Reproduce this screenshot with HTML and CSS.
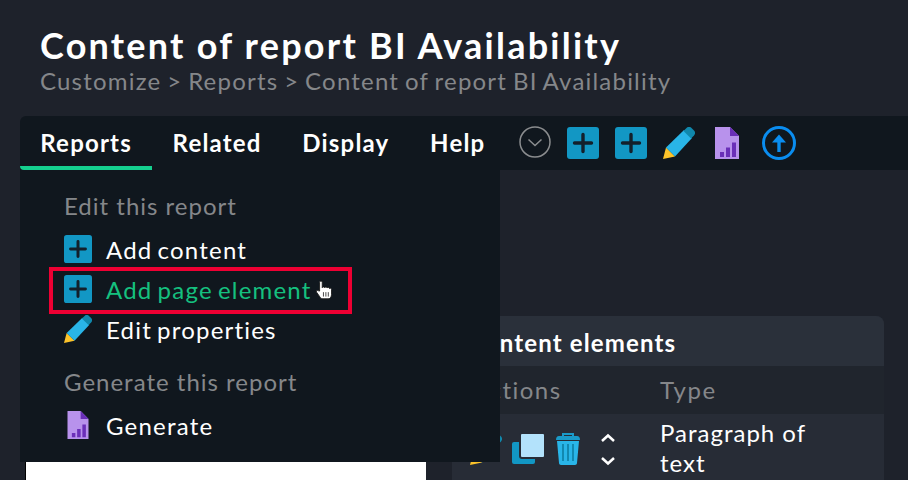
FILE: index.html
```html
<!DOCTYPE html>
<html lang="en">

<head>
    <meta charset="UTF-8">
    <title>Content of report BI Availability</title>
    <link rel="stylesheet" href="styles.css">
</head>

<body>

    <svg class="defs" width="0" height="0">
        <symbol id="plus" viewBox="0 0 32 32">
            <rect width="32" height="32" rx="3" fill="#1297c4"></rect>
            <path d="M16 7.500v17M7.500 16h17" stroke="#13202b" stroke-width="3.400" stroke-linecap="round"></path>
        </symbol>
        <symbol id="pencil" viewBox="0 0 32 32">
            <path d="M0 32l3-11.500 9 9z" fill="#fcc32a"></path>
            <path d="M3 20.500L21 3l8 8-17 18.500z" fill="#29b5e8"></path>
            <path d="M20.500 4l3-3c1.500-1.500 3.500-1.500 5 0l2.500 2.500c1.500 1.500 1.500 3.500 0 5l-3 3z" fill="#1088ac"></path>
        </symbol>
        <symbol id="report" viewBox="0 0 24 32">
            <path d="M0 0h15l9 9v23H0z" fill="#b892ec"></path>
            <path d="M15 0l9 9h-9z" fill="#6a2fb8"></path>
            <path d="M5 25h4v5H5zM11 20.500h4V30h-4zM17 15.500h4V30h-4z" fill="#6a2fb8"></path>
        </symbol>
    </svg>

    <header class="page-head">
        <h1 class="title">Content of report BI Availability</h1>
        <p class="breadcrumb">Customize &gt; Reports &gt; Content of report BI Availability</p>
    </header>

    <nav class="menubar">
        <a class="tab active">Reports</a>
        <a class="tab">Related</a>
        <a class="tab">Display</a>
        <a class="tab">Help</a>

        <div class="tools">
            <svg class="tool-toggle" viewBox="0 0 32 32">
                <circle cx="16" cy="16" r="15" fill="none" stroke="#8b8d8f" stroke-width="1.500"></circle>
                <path d="M9.500 13.500l6.500 6 6.500-6" fill="none" stroke="#8b8d8f" stroke-width="1.500"></path>
            </svg>
            <svg class="icon"><use href="#plus"></use></svg>
            <svg class="icon"><use href="#plus"></use></svg>
            <svg class="icon"><use href="#pencil"></use></svg>
            <svg class="icon-report"><use href="#report"></use></svg>
            <svg class="tool-up" viewBox="0 0 34 34">
                <circle cx="17" cy="17" r="15.500" fill="none" stroke="#0a8df0" stroke-width="3"></circle>
                <path d="M17 26V11" stroke="#0a8df0" stroke-width="3.400"></path>
                <path d="M10 16.500L17 8.500l7 8z" fill="#0a8df0"></path>
            </svg>
        </div>
    </nav>

    <div class="dropdown">
        <h3 class="group first">Edit this report</h3>
        <a class="entry"><svg class="entry-icon"><use href="#plus"></use></svg>Add content</a>
        <a class="entry hover">
            <svg class="entry-icon"><use href="#plus"></use></svg>Add page element
            <svg class="hand" viewBox="0 0 16 19">
                <path d="M4 10V2.200c0-1.600 2.400-1.600 2.400 0V7c0-1 2-1 2.200 0 .2-.9 2-.9 2.200.2.300-.8 2.200-.6 2.200.6 0-.6 1.800-.6 1.800 .8v4.400c0 2.200-1 4-3 4H7c-1.500 0-2.500-1-3.200-2.400L1.300 11c-.7-1.300 1-2.200 1.800-1.200z" fill="#fff" stroke="#1a1a1a" stroke-width=".8"></path>
                <path d="M7.500 11v4M9.700 11v4M11.900 11v4" stroke="#333" stroke-width=".8"></path>
            </svg>
        </a>
        <a class="entry"><svg class="entry-icon"><use href="#pencil"></use></svg>Edit properties</a>
        <h3 class="group">Generate this report</h3>
        <a class="entry"><svg class="entry-icon-report"><use href="#report"></use></svg>Generate</a>
    </div>

    <div class="highlight"></div>

    <main class="content">
        <div class="preview"></div>

        <section class="card">
            <h2 class="card-title">Content elements</h2>
            <div class="row heads">
                <span>Actions</span>
                <span>Type</span>
            </div>
            <div class="row body-row">
                <div class="actions">
                    <svg class="act-pencil"><use href="#pencil"></use></svg>
                    <svg class="act-copy" viewBox="0 0 33 31">
                        <rect x="0" y="9" width="23" height="22" rx="2" fill="#1297c4"></rect>
                        <rect x="8" y="0" width="25" height="25" rx="2" fill="#b3e2fb" stroke="#272c36" stroke-width="2"></rect>
                    </svg>
                    <svg class="act-trash" viewBox="0 0 26 32">
                        <path d="M8 3V1h10v2" fill="none" stroke="#1a9ac8" stroke-width="2"></path>
                        <path d="M1 7c0-2.500 1-4 3-4h18c2 0 3 1.500 3 4z" fill="#1a9ac8"></path>
                        <path d="M2 8h22l-2 22c0 1-1 2-2 2H6c-1 0-2-1-2-2z" fill="#29b5e8"></path>
                        <path d="M8 11v17M13 11v17M18 11v17" stroke="#1288b0" stroke-width="2"></path>
                    </svg>
                    <div class="arrows">
                        <svg viewBox="0 0 16 10"><path d="M2 8l6-5.500L14 8" fill="none" stroke="#fff" stroke-width="2.500"></path></svg>
                        <svg viewBox="0 0 16 10"><path d="M2 2l6 5.500L14 2" fill="none" stroke="#fff" stroke-width="2.500"></path></svg>
                    </div>
                </div>
                <span class="type-cell">Paragraph of text</span>
            </div>
        </section>
    </main>

</body>

</html>
```

FILE: styles.css
```css
* {
    box-sizing: border-box;
}

html,
body {
    height: 480px;
    overflow: hidden;
}

body {
    margin: 0;
    position: relative;
    background-color: #1e222b;
    color: #fff;
    font-family: Lato, "Noto Sans", sans-serif;
    font-size: 24px;
    letter-spacing: 1px;
}

.defs {
    position: absolute;
}

.page-head {
    height: 116px;
    padding: 24px 0 0 40px;
}

.title {
    margin: 0;
    font-size: 36px;
    line-height: 42px;
    font-weight: 700;
    letter-spacing: 2.230px;
}

.breadcrumb {
    margin: 0;
    font-size: 24px;
    line-height: 30px;
    color: #85878a;
    letter-spacing: 1.200px;
    word-spacing: -1.500px;
}

.menubar {
    display: flex;
    align-items: center;
    height: 54px;
    margin-left: 20px;
    background-color: #10171e;
    border-top-left-radius: 6px;
}

.tab {
    align-self: stretch;
    padding: 0 20.300px;
    line-height: 54px;
    font-weight: 700;
    letter-spacing: 1.200px;
    border-bottom: 4px solid transparent;
}

.tab.active {
    border-bottom-color: #15d08f;
    border-bottom-left-radius: 4px;
}

.tools {
    display: flex;
    align-items: center;
    gap: 16px;
    margin-left: 13px;
}

.tool-toggle {
    width: 32px;
    height: 32px;
    margin-top: -3px;
}

.icon {
    width: 32px;
    height: 32px;
}

.icon-report {
    width: 24px;
    height: 32px;
    margin-left: 4px;
}

.tool-up {
    width: 34px;
    height: 34px;
    margin-left: 7px;
}

.dropdown {
    position: absolute;
    top: 170px;
    left: 20px;
    z-index: 2;
    width: 480px;
    height: 292px;
    padding: 21px 0 0 44px;
    background-color: #10171e;
    letter-spacing: 1.200px;
    word-spacing: -2.200px;
}

.group {
    margin: 0;
    padding-top: 18px;
    font-size: 24px;
    line-height: 30px;
    font-weight: 400;
    color: #85878a;
    letter-spacing: 1px;
    word-spacing: 0;
}

.group.first {
    padding-top: 0;
}

.entry {
    display: flex;
    align-items: center;
    height: 40px;
}

.group + .entry {
    margin-top: 8px;
}

.entry.hover {
    color: #15c07f;
}

.entry-icon {
    width: 28px;
    height: 28px;
    margin-right: 14px;
}

.entry-icon-report {
    width: 24px;
    height: 28px;
    margin: 0 16px 0 2px;
}

.hand {
    width: 18px;
    height: 21px;
    margin: 3px 0 0 3px;
}

.highlight {
    position: absolute;
    top: 267px;
    left: 49px;
    z-index: 3;
    width: 303px;
    height: 47px;
    border: 4px solid #ee0033;
}

.content {
    display: flex;
    align-items: flex-start;
    height: 310px;
    padding: 146px 0 0 25px;
    overflow: hidden;
}

.preview {
    width: 401px;
    height: 44px;
    margin: 120px 26px 0 0;
    background-color: #fff;
    border-left: 1px solid #000;
}

.card {
    width: 432px;
    height: 164px;
    background-color: #272c36;
    border-radius: 8px 8px 0 0;
    overflow: hidden;
}

.card-title {
    margin: 0;
    height: 50px;
    padding-left: 16px;
    font-size: 24px;
    line-height: 54px;
    font-weight: 700;
    letter-spacing: 1.150px;
    background-color: #2a303a;
}

.row {
    display: grid;
    grid-template-columns: 208px 180px;
}

.heads {
    height: 48px;
    line-height: 48px;
    color: #85878a;
    letter-spacing: 1.500px;
    background-color: #20252d;
}

.heads span:first-child {
    padding-left: 20px;
}

.body-row {
    height: 66px;
    padding-top: 5px;
    line-height: 30px;
}

.type-cell {
    margin-top: -1px;
}

.actions {
    display: flex;
    align-items: flex-start;
    padding: 14px 0 0 18px;
}

.act-pencil {
    width: 32px;
    height: 32px;
    margin-right: 10px;
}

.act-copy {
    width: 33px;
    height: 31px;
    margin-right: 10px;
}

.act-trash {
    width: 26px;
    height: 32px;
    margin-right: 19px;
}

.arrows {
    display: flex;
    flex-direction: column;
    gap: 13px;
}

.arrows svg {
    display: block;
    width: 16px;
    height: 10px;
}
```
